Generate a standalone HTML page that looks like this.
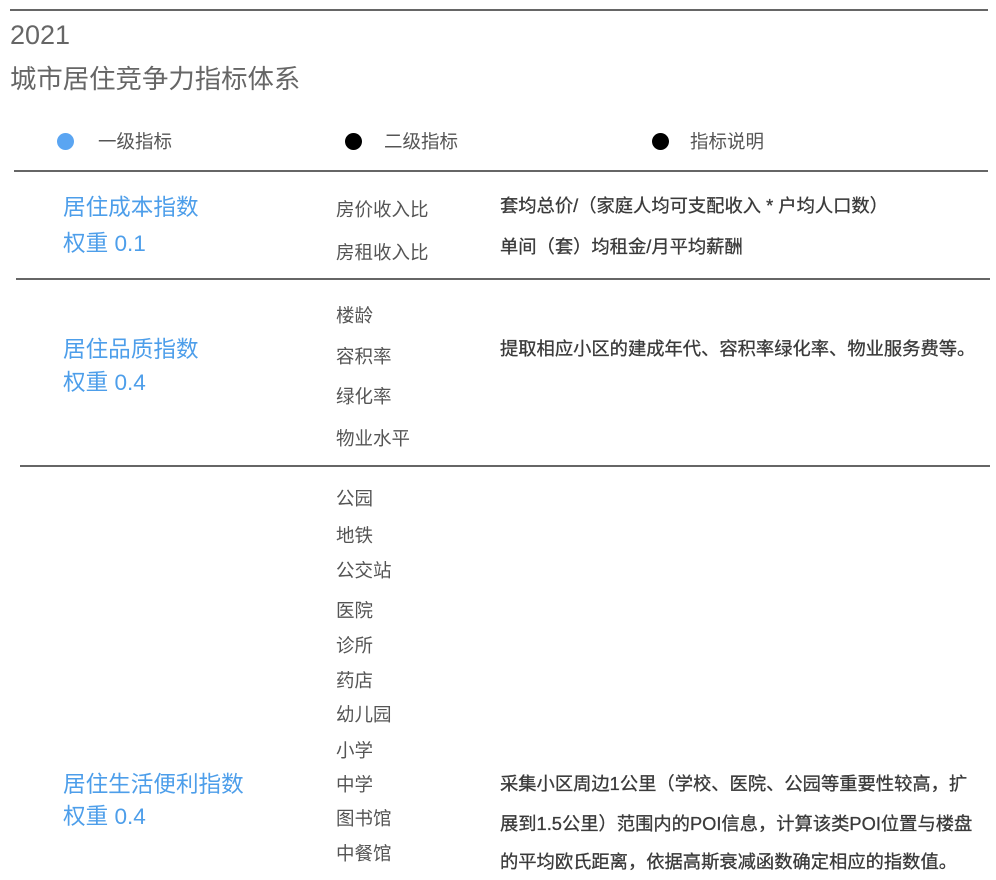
<!DOCTYPE html>
<html><head><meta charset="utf-8"><style>
body{margin:0;width:996px;height:880px;background:#fff;position:relative;overflow:hidden;font-family:"Liberation Sans","Noto Sans CJK SC",sans-serif;color:#555}
.a{position:absolute;white-space:nowrap;line-height:30px}
.l{position:absolute;height:2px;background:#666}
.b{color:#4d9eea;font-size:22.6px}
.s{font-size:18.5px;color:#555}
.g{font-size:18.5px;color:#555}
.d{font-size:18.3px;color:#3a3a3a;font-weight:normal;-webkit-text-stroke:0.3px #3a3a3a}
.dot{position:absolute;width:17px;height:17px;border-radius:50%}
</style></head><body>
<div class="l" style="left:10px;top:9px;width:978px"></div>
<div class="a" style="left:10px;top:20px;font-size:27px;color:#666">2021</div>
<div class="a" style="left:10px;top:64px;font-size:26.4px;color:#666">城市居住竞争力指标体系</div>

<div class="dot" style="left:57px;top:133px;background:#5aa5f2"></div>
<div class="a g" style="left:98px;top:127px">一级指标</div>
<div class="dot" style="left:345px;top:133px;background:#000"></div>
<div class="a g" style="left:384px;top:127px">二级指标</div>
<div class="dot" style="left:652px;top:133px;background:#000"></div>
<div class="a g" style="left:690px;top:127px">指标说明</div>

<div class="l" style="left:14px;top:170px;width:974px"></div>
<div class="a b" style="left:63px;top:193px">居住成本指数</div>
<div class="a b" style="left:63px;top:229px">权重 0.1</div>
<div class="a s" style="left:336px;top:195px">房价收入比</div>
<div class="a s" style="left:336px;top:238px">房租收入比</div>
<div class="a d" style="left:500px;top:191px">套均总价/（家庭人均可支配收入 * 户均人口数）</div>
<div class="a d" style="left:500px;top:232px">单间（套）均租金/月平均薪酬</div>

<div class="l" style="left:16px;top:278px;width:974px"></div>
<div class="a b" style="left:63px;top:335px">居住品质指数</div>
<div class="a b" style="left:63px;top:368px">权重 0.4</div>
<div class="a s" style="left:336px;top:301px">楼龄</div>
<div class="a s" style="left:336px;top:342px">容积率</div>
<div class="a s" style="left:336px;top:382px">绿化率</div>
<div class="a s" style="left:336px;top:424px">物业水平</div>
<div class="a d" style="left:500px;top:334px">提取相应小区的建成年代、容积率绿化率、物业服务费等。</div>

<div class="l" style="left:20px;top:465px;width:970px"></div>
<div class="a s" style="left:336px;top:484px">公园</div>
<div class="a s" style="left:336px;top:521px">地铁</div>
<div class="a s" style="left:336px;top:556px">公交站</div>
<div class="a s" style="left:336px;top:596px">医院</div>
<div class="a s" style="left:336px;top:631px">诊所</div>
<div class="a s" style="left:336px;top:666px">药店</div>
<div class="a s" style="left:336px;top:700px">幼儿园</div>
<div class="a s" style="left:336px;top:736px">小学</div>
<div class="a s" style="left:336px;top:770px">中学</div>
<div class="a s" style="left:336px;top:804px">图书馆</div>
<div class="a s" style="left:336px;top:839px">中餐馆</div>
<div class="a b" style="left:63px;top:770px">居住生活便利指数</div>
<div class="a b" style="left:63px;top:802px">权重 0.4</div>
<div class="a d" style="left:500px;top:769px">采集小区周边1公里（学校、医院、公园等重要性较高，扩</div>
<div class="a d" style="left:500px;top:809px">展到1.5公里）范围内的POI信息，计算该类POI位置与楼盘</div>
<div class="a d" style="left:500px;top:847px">的平均欧氏距离，依据高斯衰减函数确定相应的指数值。</div>
</body></html>
